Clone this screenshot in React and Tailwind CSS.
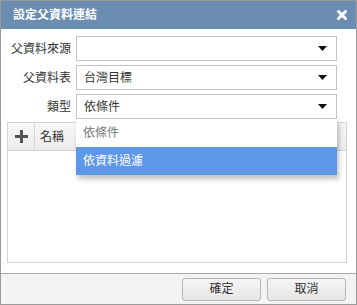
import React from 'react';

const font = { fontFamily: '"Liberation Sans", "Noto Sans CJK TC", sans-serif' };

const Caret = () => (
  <svg width="9" height="6" viewBox="0 0 9 6" className="shrink-0">
    <path d="M0 0h9L4.5 5z" fill="#111" />
  </svg>
);

const Select = ({ value }) => (
  <div className="flex h-[25px] flex-1 items-center border border-[#c3c3c3] bg-white pl-[7px] pr-[9px] text-[12px] text-[#333]">
    <span className="flex-1">{value}</span>
    <Caret />
  </div>
);

const Row = ({ label, value, children }) => (
  <div className="relative flex items-center">
    <div className="w-[70px] pr-[5px] text-right text-[12px] text-[#333]">{label}</div>
    <Select value={value} />
    {children}
  </div>
);

export default function App() {
  return (
    <div className="flex h-[305px] w-[357px] flex-col border border-[#9a9a9a] bg-white" style={font}>
      {/* title bar */}
      <div className="flex h-[28px] items-center justify-between bg-[#6a8db1] pl-[12px] pr-[9px]">
        <span className="text-[12px] font-bold text-white">設定父資料連結</span>
        <svg width="10" height="10" viewBox="0 0 10 10">
          <path d="M1.5 1.5l7 7M8.5 1.5l-7 7" stroke="#fff" strokeWidth="3" strokeLinecap="square" />
        </svg>
      </div>

      {/* form */}
      <div className="flex flex-1 flex-col pt-[7px] pr-[19px] pl-[5px]">
        <div className="flex flex-col gap-[4px]">
          <Row label="父資料來源" value="" />
          <Row label="父資料表" value="台灣目標" />
          <Row label="類型" value="依條件">
            <div className="absolute left-[70px] right-0 top-[25px] z-10 flex flex-col bg-white text-[12px] shadow-[2px_4px_5px_rgba(0,0,0,0.25)]">
              <div className="flex h-[28px] items-center pl-[7px] text-[#777]">依條件</div>
              <div className="flex h-[28px] items-center bg-[#5e96e8] pl-[7px] text-white">依資料過濾</div>
            </div>
          </Row>
        </div>

        {/* grid */}
        <div className="mt-[3px] mr-[-10px] mb-[10px] ml-[1px] flex flex-1 flex-col border border-[#d5d5d5]">
          <div className="flex h-[28px] items-stretch border-b border-[#d5d5d5] bg-gradient-to-b from-[#f7f7f7] to-[#ececec]">
            <div className="flex w-[27px] items-center justify-center border-r border-[#d5d5d5]">
              <svg width="15" height="15" viewBox="0 0 15 15">
                <path d="M7.5 1v13M1 7.5h13" stroke="#555" strokeWidth="3" />
              </svg>
            </div>
            <div className="flex items-center pl-[5px] text-[12px] text-[#333]">名稱</div>
          </div>
          <div className="flex-1 bg-white" />
        </div>
      </div>

      {/* footer */}
      <div className="flex h-[31px] items-center justify-end gap-[6px] border-t border-[#a9a9a9] bg-[#f3f3f3] pr-[10px]">
        <button className="h-[23px] w-[79px] rounded-[3px] border border-[#b5b5b5] bg-gradient-to-b from-[#f6f6f6] to-[#e6e6e6] text-[12px] text-[#333]">確定</button>
        <button className="h-[23px] w-[79px] rounded-[3px] border border-[#b5b5b5] bg-gradient-to-b from-[#f6f6f6] to-[#e6e6e6] text-[12px] text-[#333]">取消</button>
      </div>
    </div>
  );
}
